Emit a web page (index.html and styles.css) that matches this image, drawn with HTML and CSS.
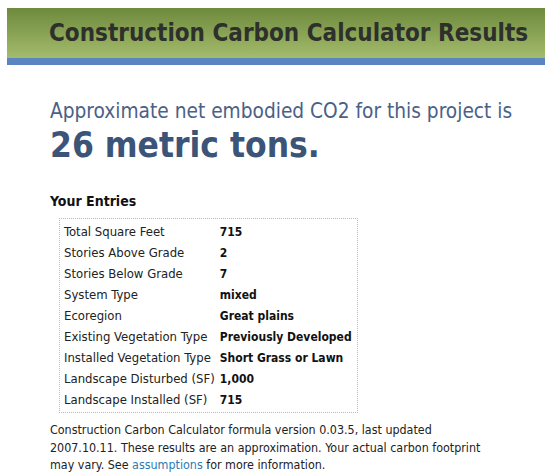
FILE: index.html
```html
<!DOCTYPE html>
<html>
<head>
<meta charset="utf-8">
<link rel="stylesheet" href="styles.css">
</head>
<body>
<div class="banner">
  <h1 class="title">Construction Carbon Calculator Results</h1>
</div>
<div class="content">
  <p class="lead">Approximate net embodied CO2 for this project is</p>
  <p class="amount">26 metric tons.</p>
  <h2 class="entries-title">Your Entries</h2>
  <table class="entries">
    <tr><td class="label">Total Square Feet</td><td class="value">715</td></tr>
    <tr><td class="label">Stories Above Grade</td><td class="value">2</td></tr>
    <tr><td class="label">Stories Below Grade</td><td class="value">7</td></tr>
    <tr><td class="label">System Type</td><td class="value">mixed</td></tr>
    <tr><td class="label">Ecoregion</td><td class="value">Great plains</td></tr>
    <tr><td class="label">Existing Vegetation Type</td><td class="value">Previously Developed</td></tr>
    <tr><td class="label">Installed Vegetation Type</td><td class="value">Short Grass or Lawn</td></tr>
    <tr><td class="label">Landscape Disturbed (SF)</td><td class="value">1,000</td></tr>
    <tr><td class="label">Landscape Installed (SF)</td><td class="value">715</td></tr>
  </table>
  <p class="note">Construction Carbon Calculator formula version 0.03.5, last updated 2007.10.11. These results are an approximation. Your actual carbon footprint may vary. See <a href="#" class="link">assumptions</a> for more information.</p>
</div>
</body>
</html>
```
FILE: styles.css
```css
html, body {
  margin: 0;
  padding: 0;
  background: #ffffff;
}
body {
  padding: 8px 5px 0 7px;
  font-family: "DejaVu Sans Condensed", "DejaVu Sans", sans-serif;
  color: #222;
}
.banner {
  height: 50px;
  background: linear-gradient(#6e8a3c, #a3bb6d);
  border-bottom: 7px solid #5b85c0;
  padding-left: 42px;
  display: flex;
  align-items: center;
}
.title {
  margin: 0;
  font-size: 24px;
  font-weight: bold;
  color: #2e302c;
  white-space: nowrap;
}
.content {
  padding-left: 43px;
}
.lead {
  margin: 32px 0 0;
  font-size: 20.7px;
  line-height: 28px;
  color: #4a6186;
}
.amount {
  margin: 0;
  font-size: 35px;
  line-height: 40px;
  font-weight: bold;
  color: #3b5478;
}
.entries-title {
  margin: 28px 0 9px;
  font-size: 14px;
  font-weight: bold;
  color: #111;
}
.entries {
  margin-left: 9px;
  border: 1px dotted #bbb;
  border-collapse: separate;
  border-spacing: 0;
  padding: 2px 2px;
  font-size: 13px;
}
.entries td {
  padding: 0 3px 0 2px;
  height: 21px;
  color: #222;
  white-space: nowrap;
}
.entries .value {
  font-size: 12px;
  font-weight: bold;
  color: #111;
}
.note {
  margin: 8px 0 0;
  font-size: 12.4px;
  line-height: 17.5px;
  color: #222;
  width: 445px;
}
.link {
  color: #2c7bb6;
  text-decoration: none;
}
```
